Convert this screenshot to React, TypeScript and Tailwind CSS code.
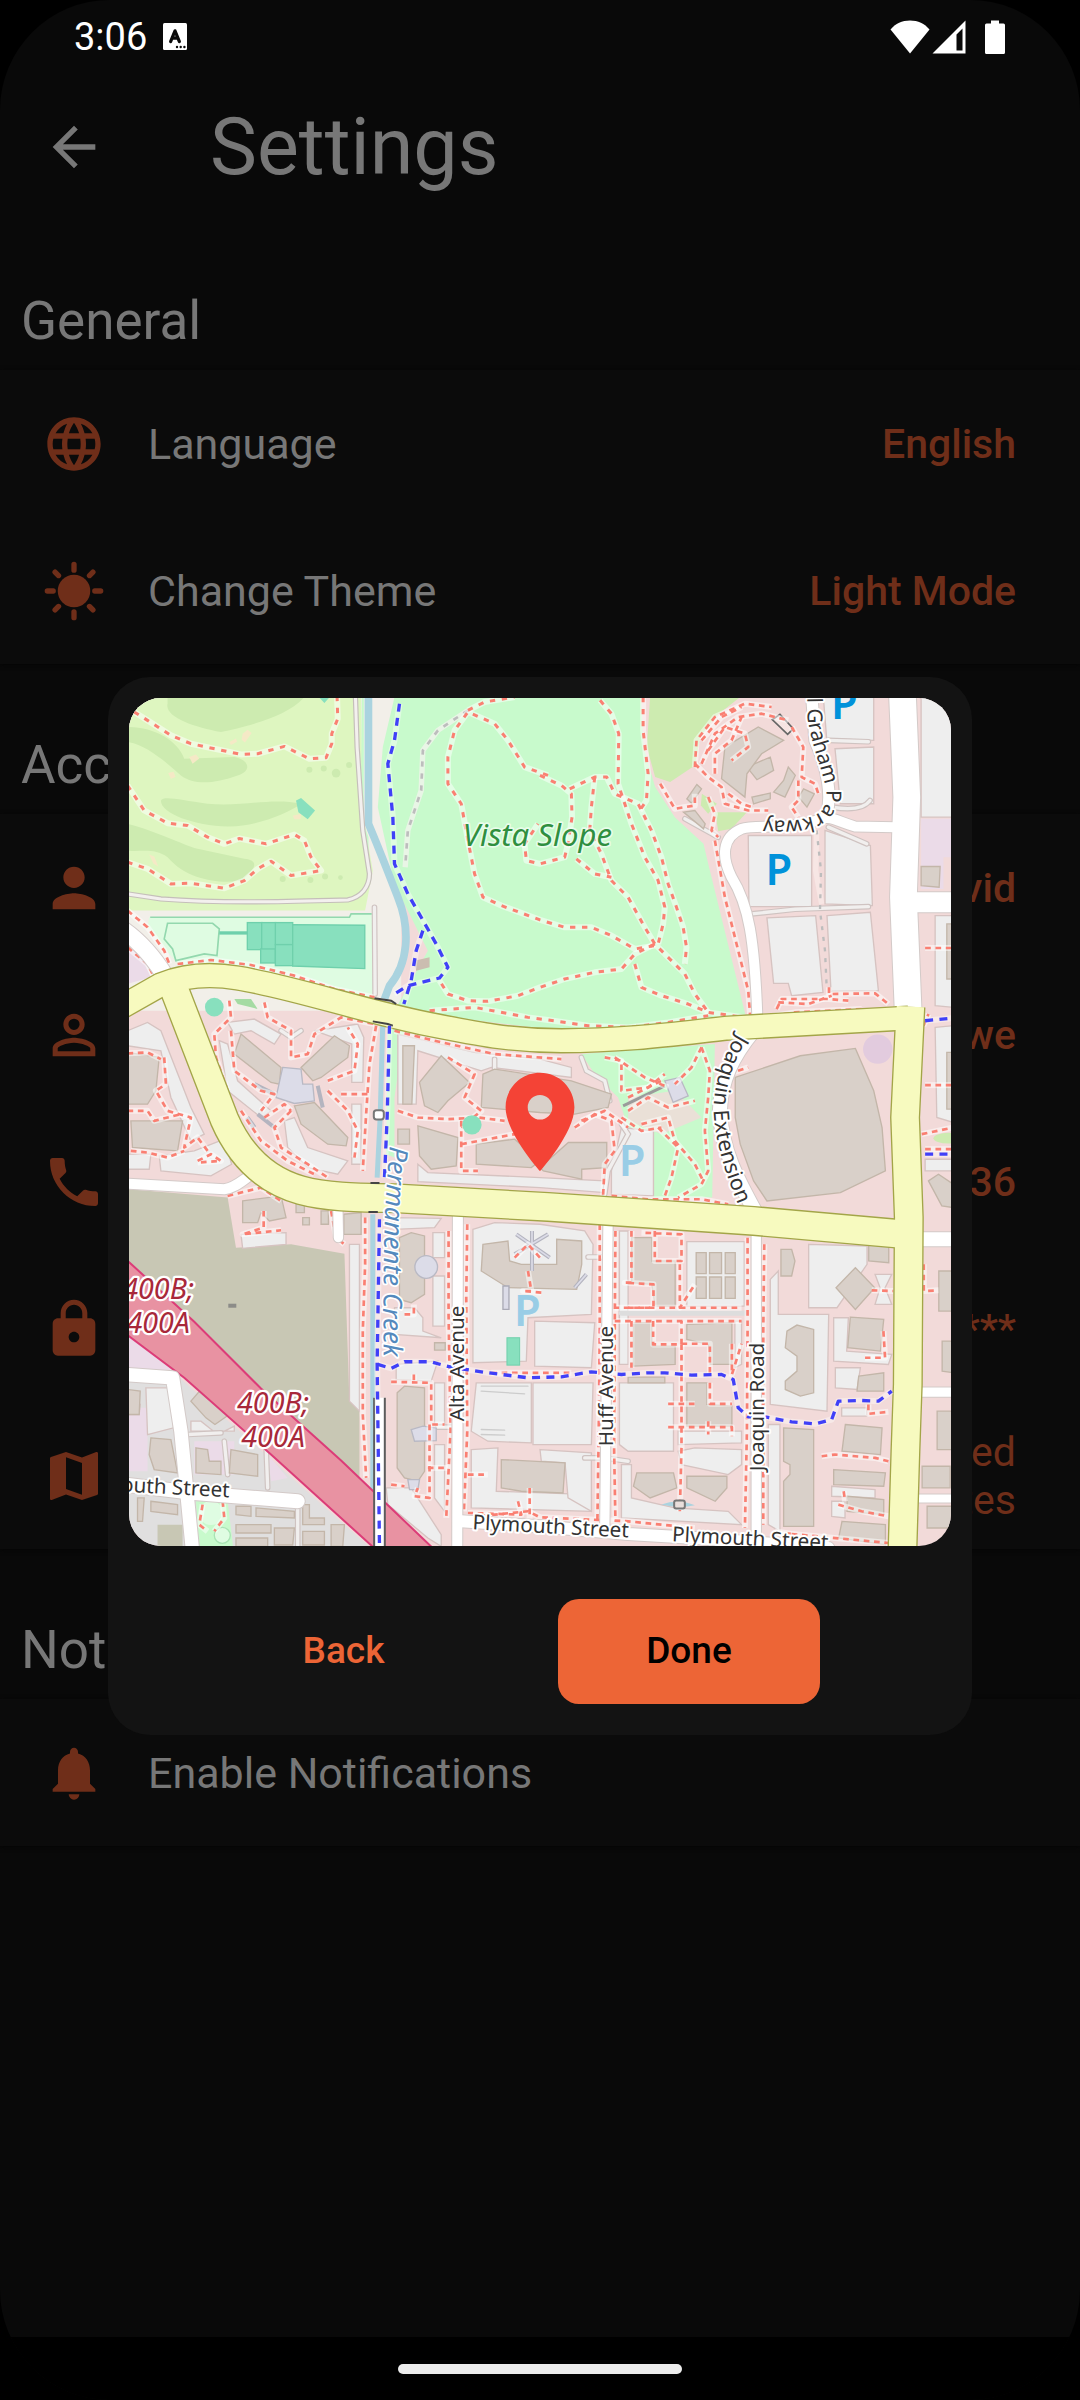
import React from "react";
import type { IconType } from "react-icons";
import {
  MdArrowBack,
  MdLanguage,
  MdPerson,
  MdPersonOutline,
  MdPhone,
  MdLock,
  MdMap,
  MdNotifications,
  MdLocationOn,
} from "react-icons/md";

/* ---------- map data ---------- */

const fairways = [
  "M120 20C110 60 200 90 280 105C350 90 480 60 530 0L120 0Z",
  "M0 90C80 90 150 130 170 185L320 180C370 190 370 225 330 235C260 260 200 265 160 235C110 190 50 140 0 135Z",
  "M100 310C110 295 160 310 240 320C350 330 430 300 520 320C480 350 380 390 300 388C200 385 100 350 100 310Z",
  "M0 380C80 400 160 440 210 455L350 485C400 490 380 520 340 550C280 560 180 550 120 480C80 450 40 465 0 460Z",
  "M1566 0L1836 0L1760 60L1716 120L1700 205L1626 255L1581 240L1556 150Z",
  "M1721 290L1766 320L1740 350L1718 325Z",
  "M1761 345L1856 345L1810 395L1770 402Z",
];

const parkings = [
  "1860,415 2050,415 2050,628 1862,628",
  "2090,400 2226,445 2232,625 2090,620",
  "1916,662 2062,655 2084,885 1990,895 1980,858 1936,858",
  "2096,655 2226,645 2250,880 2108,882",
  "2085,0 2236,0 2236,130 2095,125",
  "2120,155 2236,150 2236,320 2136,320",
  "2378,0 2475,0 2475,360 2378,360",
  "2420,655 2475,655 2475,930 2420,925",
  "2420,990 2475,985 2475,1275 2425,1260",
  "0,1000 60,975 100,1000 190,1230 230,1310 190,1330 130,1200 100,1060 0,1045",
  "0,1370 70,1370 65,1415 0,1415",
  "95,1375 200,1360 290,1325 312,1400 250,1435 100,1420",
  "300,975 380,965 460,1010 440,1040 370,1000 320,1010",
  "275,1030 300,1040 330,1150 430,1240 400,1260 300,1180",
  "560,1000 690,980 708,1020 705,1155 672,1155 672,1040",
  "672,1220 700,1220 700,1400 672,1400",
  "470,1270 500,1260 540,1350 660,1390 630,1430 540,1410 480,1350",
  "810,1010 1040,1065 1236,1085 1330,1110 1330,1140 1090,1110 1060,1120 870,1060 865,1220 810,1220",
  "870,1400 900,1425 1236,1440 1430,1450 1430,1485 1236,1470 870,1452",
  "1480,1290 1576,1300 1576,1495 1450,1490 1450,1420",
  "340,1610 475,1605 475,1640 345,1652",
  "665,1640 695,1640 695,2140 665,2110",
  "800,1560 940,1562 920,1590 800,1595",
  "915,1605 950,1605 950,1680 915,1680",
  "915,1735 950,1735 950,1885 915,1885",
  "800,1830 860,1830 885,1860 885,1900 940,1920 800,1910",
  "805,2000 930,1990 910,2050 805,2045",
  "775,2370 850,2370 940,2510 940,2545 900,2520 780,2420",
  "920,2055 950,2055 950,2180 920,2180",
  "920,2240 950,2240 950,2440 920,2400",
  "1035,1595 1100,1575 1236,1580 1370,1600 1395,1640 1390,1850 1200,1860 1195,1990 1035,1995",
  "1220,1870 1400,1875 1390,2010 1220,2005",
  "1045,2055 1210,2055 1210,2235 1080,2230 1030,2200",
  "1215,2055 1395,2055 1390,2240 1215,2240",
  "1030,2255 1110,2250 1105,2380 1390,2390 1390,2440 1030,2430",
  "1236,2255 1390,2265 1390,2440 1320,2400 1311,2295 1240,2290",
  "1474,1600 1500,1600 1500,2000 1474,2000",
  "1676,1632 1848,1632 1848,1825 1676,1825",
  "1474,2055 1636,2055 1636,2260 1500,2260 1474,2240",
  "1650,2200 1840,2200 1840,2235 1650,2240",
  "1820,1870 1840,1870 1840,2000 1820,2010",
  "1480,2300 1510,2300 1510,2400 1640,2430 1800,2440 1840,2480 1480,2460",
  "1650,2260 1700,2250 1840,2255 1840,2300 1800,2330 1660,2300",
  "2041,1640 2216,1645 2216,1700 2126,1830 2041,1830",
  "1926,1745 1950,1720 1950,1850 2101,1850 2096,2140 1926,2120",
  "2240,1730 2290,1730 2270,1770 2290,1820 2240,1820 2255,1770",
  "2116,1860 2160,1860 2155,1960 2290,1970 2280,2000 2116,1990",
  "2121,2010 2196,2010 2186,2075 2121,2070",
  "2140,2130 2215,2130 2215,2155 2140,2155",
  "1920,2180 1955,2180 1955,2500 1920,2480",
  "2110,2365 2240,2375 2240,2400 2110,2395",
  "2110,2410 2150,2410 2150,2460 2110,2455",
  "2390,1385 2475,1385 2475,1420 2390,1420",
  "0,2120 38,2120 35,2150 0,2150",
  "55,2070 130,2070 138,2190 60,2210",
  "190,2170 220,2170 270,2210 320,2185 320,2200 190,2200",
];

const buildings = [
  "2378,508 2435,508 2432,570 2378,565",
  "2455,680 2475,680 2475,845 2455,845",
  "2455,1065 2475,1065 2475,1235 2455,1235",
  "1666,345 1700,340 1731,380 1726,395",
  "1676,305 1706,262 1720,275 1690,318",
  "1856,210 1926,180 1936,220 1886,248",
  "1936,285 1966,250 1980,210 2001,235 1970,300",
  "1871,300 1926,288 1926,305 1876,320",
  "2011,300 2026,275 2058,290 2036,330",
  "1790,150 1890,90 1966,130 1900,170 1856,230 1850,300 1780,245",
  "1821,1140 2016,1075 2181,1053 2236,1180 2261,1290 2271,1420 2136,1485 1916,1510 1876,1450 1836,1340 1821,1260",
  "875,1155 940,1075 1025,1155 960,1210 930,1245 890,1225",
  "825,1045 860,1045 852,1220 825,1220",
  "1065,1130 1100,1115 1330,1150 1450,1190 1440,1230 1340,1250 1236,1245 1060,1230",
  "870,1285 990,1320 985,1405 910,1415 875,1375",
  "810,1295 845,1295 845,1340 810,1340",
  "1045,1340 1160,1325 1236,1390 1210,1410 1045,1400",
  "1236,1410 1321,1335 1436,1335 1436,1410 1361,1415 1361,1445 1246,1420",
  "340,1010 460,1110 455,1160 430,1155 320,1070",
  "520,1110 620,1015 665,1045 660,1080 580,1140 555,1150",
  "500,1225 560,1215 660,1320 655,1345 600,1340 520,1280",
  "0,1065 95,1080 85,1180 60,1220 0,1220",
  "10,1270 165,1270 150,1360 15,1350",
  "345,1510 460,1495 475,1560 425,1570 400,1545 390,1575 345,1575",
  "505,1515 530,1515 530,1545 505,1545",
  "580,1540 602,1540 602,1580 580,1580",
  "525,1560 545,1560 545,1582 525,1582",
  "648,1550 700,1545 700,1610 648,1610",
  "815,1620 850,1605 890,1615 890,1790 850,1815 815,1805",
  "920,1935 952,1935 952,1957 920,1957",
  "808,2085 830,2065 890,2070 890,2320 870,2350 830,2340 808,2310",
  "1065,1640 1140,1630 1145,1690 1180,1700 1286,1700 1286,1625 1361,1630 1361,1700 1346,1775 1140,1770 1060,1720",
  "1120,2285 1311,2295 1305,2385 1180,2380 1120,2370",
  "1511,1620 1571,1620 1571,1690 1641,1690 1641,1825 1581,1825 1571,1760 1511,1755",
  "1516,1875 1571,1875 1571,1945 1641,1945 1641,2000 1516,2005",
  "1676,1880 1811,1875 1811,2000 1746,2000 1741,1940 1676,1925",
  "1676,2055 1736,2055 1736,2120 1811,2125 1811,2185 1676,2185",
  "1500,2038 1610,2038 1610,2055 1500,2055",
  "1704,1665 1734,1665 1734,1728 1704,1728",
  "1744,1665 1780,1665 1780,1728 1744,1728",
  "1791,1665 1821,1665 1821,1728 1791,1728",
  "1704,1738 1734,1738 1734,1802 1704,1802",
  "1744,1738 1780,1738 1780,1802 1744,1802",
  "1791,1738 1821,1738 1821,1802 1791,1802",
  "1526,2325 1636,2325 1646,2370 1566,2400 1516,2365",
  "1676,2335 1796,2335 1796,2370 1761,2410 1676,2370",
  "1958,1655 1990,1655 2000,1690 1990,1735 1958,1735",
  "2181,1710 2239,1770 2181,1835 2123,1770",
  "2221,1640 2281,1640 2281,1695 2221,1690",
  "1976,1900 2006,1882 2056,1895 2056,2085 2016,2095 1971,2075 1971,2050 2006,2020 2006,1975 1971,1950",
  "2166,1858 2266,1865 2256,1960 2158,1950",
  "2191,2035 2266,2025 2266,2080 2186,2080",
  "1966,2190 2056,2195 2056,2485 1966,2485 1966,2350 1985,2330 1985,2300 1966,2290",
  "2151,2180 2261,2190 2256,2270 2141,2260",
  "2116,2315 2271,2325 2266,2365 2116,2360",
  "2156,2395 2266,2405 2266,2450 2156,2440",
  "2141,2470 2271,2480 2271,2540 2131,2520",
  "2431,1720 2475,1720 2475,1840 2431,1840",
  "2441,1930 2475,1930 2475,2025 2441,2020",
  "2426,2140 2475,2140 2475,2255 2426,2255",
  "2381,2305 2465,2305 2465,2370 2381,2370",
  "2396,2425 2475,2425 2475,2490 2396,2490",
  "2400,1450 2430,1430 2475,1460 2475,1530 2440,1525",
  "0,2075 38,2080 35,2150 0,2150",
  "70,2220 130,2225 150,2325 80,2315 65,2270",
  "190,2110 220,2075 305,2150 262,2180 235,2160",
  "205,2250 240,2255 245,2290 280,2290 280,2330 205,2325",
  "310,2255 390,2270 390,2335 305,2325",
  "325,2425 370,2425 370,2455 325,2450",
  "385,2430 500,2440 500,2460 385,2455",
  "325,2480 430,2480 430,2505 325,2505",
  "525,2420 545,2420 545,2460 590,2460 590,2480 525,2480",
  "525,2500 590,2500 590,2541 525,2541",
  "610,2480 650,2480 645,2545 610,2545",
  "30,2400 50,2400 45,2470 30,2470",
  "70,2410 150,2420 150,2450 70,2440",
  "440,2490 500,2490 495,2541 440,2541",
  "325,2520 420,2520 420,2545 325,2545",
];

const lavender = [
  "465,1110 520,1115 525,1160 555,1160 560,1210 500,1218 445,1200",
  "850,2195 885,2185 925,2190 925,2228 860,2230",
  "1610,1150 1655,1140 1680,1195 1635,1215",
  "840,2345 875,2345 870,2375 845,2375",
];

const parkPaths = [
  "20,45 60,70 130,115 190,140 340,172 390,170 470,148 545,185 595,182 612,140 612,110 630,65 628,0",
  "0,265 50,340 120,378 180,385 240,420 290,440 335,424 415,440 500,412 530,430 550,480 580,520 490,535 430,492 390,515 350,550 290,573 190,558 130,560 60,515 0,495",
  "1260,235 1190,210 1140,130 1100,80 1020,45 980,100 960,180 960,260 1000,320 1020,430 1040,530 1065,600 1120,625 1236,668 1310,690 1390,690 1450,715 1520,755 1580,745",
  "1020,40 1070,15 1160,0",
  "1416,10 1450,50 1472,110 1470,260 1510,380 1550,480 1590,550 1610,630 1605,680 1590,740",
  "1236,235 1300,265 1330,290 1332,360 1320,440 1310,480 1236,500 1195,490 1190,440 1230,380",
  "1325,275 1400,240 1436,240 1460,290 1530,320 1570,400 1600,480 1620,560 1645,630 1665,690 1675,750 1670,800",
  "1400,240 1390,330 1385,400 1420,470 1450,550 1500,600 1550,690 1580,740 1640,800 1670,830 1700,890 1740,945",
  "1545,0 1545,100 1560,230 1555,310 1535,340",
  "1345,485 1400,530 1450,540",
  "1580,740 1520,770 1480,815 1400,825 1310,845 1236,870 1170,895 1080,912 1020,910 960,890 935,850",
  "1520,800 1540,870 1600,895 1680,920 1740,945 1850,960",
  "905,940 1040,930 1200,960 1260,968 1380,985 1500,990 1620,975 1740,955",
];

const footways = [
  "0,640 60,690 110,760 125,800",
  "150,800 250,788 370,803 500,835 620,875 740,900",
  "1760,430 1790,600 1830,760 1860,880 1866,960",
  "305,910 310,960 260,1010 265,1080 300,1180",
  "410,915 420,960 490,1000 490,1080 540,1070 560,1010 640,960 740,980",
  "310,1000 320,1120 400,1180 440,1190 400,1240",
  "600,1150 680,1120 690,1040 660,990",
  "640,1190 720,1190",
  "600,1180 660,1240 690,1300 680,1380",
  "490,1240 440,1290 460,1350 540,1400 600,1440",
  "340,1240 400,1330 480,1390 560,1430",
  "410,1260 470,1220 490,1240",
  "745,985 725,1100 715,1250 705,1420",
  "712,1560 712,1700 705,1900 705,2150 715,2340",
  "0,1240 60,1240 80,1270 160,1250",
  "110,1080 115,1160 85,1180 120,1240 190,1260 170,1350 210,1320 240,1360",
  "10,1360 60,1365 120,1380 170,1360",
  "210,1390 250,1370 280,1390 210,1395",
  "300,1495 400,1470 460,1510",
  "408,1540 408,1590 345,1610 460,1598",
  "610,1540 625,1620 650,1640",
  "0,750 60,800 80,840",
  "0,1068 60,1065 100,1085",
  "800,1000 920,1030 1100,1070 1300,1085",
  "960,1080 1040,1130 1010,1200 1060,1240 1000,1290",
  "810,1240 870,1260 960,1265 1050,1260 1130,1270",
  "1000,1270 1000,1420 1050,1420",
  "1000,1340 1160,1310 1240,1320",
  "1340,1290 1400,1250 1450,1270 1460,1360 1430,1400 1425,1495",
  "1360,1270 1430,1240 1500,1290",
  "1430,1080 1480,1090 1480,1180 1560,1170 1610,1130",
  "1460,1080 1550,1140 1620,1170",
  "1720,1050 1690,1110 1640,1160",
  "1720,1050 1745,1120 1740,1200 1730,1300 1740,1420 1720,1460 1650,1500",
  "1500,1200 1600,1150",
  "1500,1240 1560,1200 1620,1230 1700,1210",
  "1540,1280 1620,1260 1640,1330 1700,1400 1725,1450",
  "1590,1290 1650,1350 1630,1440 1610,1495",
  "1480,1260 1540,1300 1600,1290",
  "1450,1495 1560,1505 1720,1505 1800,1520",
  "1700,210 1705,130 1760,60 1850,20 1930,30",
  "1720,200 1760,110 1830,60 1900,50 1980,70",
  "1740,160 1790,90 1850,110 1860,150 1810,190",
  "1700,200 1740,240 1780,270 1790,320 1860,340 1920,340",
  "1760,230 1760,170 1810,130 1840,60",
  "1720,130 1780,60 1840,30",
  "1990,90 2025,150 2020,240 2060,260 2070,290",
  "2010,250 2010,310 1990,330 2010,360",
  "1596,260 1640,335 1700,325 1700,290",
  "1740,300 1760,350 1750,400 1770,420",
  "1800,290 1840,320 1870,330",
  "2102,870 2102,890 2240,888 2280,920",
  "1945,935 1960,905 2100,905 2160,910",
  "1950,915 2040,920 2110,895",
  "1905,960 2000,945 2200,935",
  "1800,1130 1860,1110",
  "962,1600 962,1850 968,2200 955,2460",
  "1018,1580 1015,1800 1018,2200 1008,2440",
  "1415,1580 1415,1900 1412,2200 1408,2470",
  "1462,1600 1460,1900 1458,2250 1462,2470",
  "1858,1620 1858,1900 1856,2200 1850,2490",
  "1908,1640 1905,1900 1905,2300 1905,2480",
  "1510,1600 1510,1755 1490,1755 1576,1760 1576,1830 1460,1830",
  "1580,1600 1580,1690 1660,1690 1660,1610 1540,1605",
  "1655,1700 1655,1830 1700,1760",
  "1500,1830 1840,1830",
  "1510,1870 1510,2010",
  "1460,1870 1840,1870",
  "1575,1870 1575,1940 1660,1940 1660,1870",
  "1660,1940 1660,2250 1655,2440",
  "1660,1938 1745,1938 1745,2030",
  "1811,1938 1811,2030 1840,1938",
  "1745,2055 1745,2118 1811,2118",
  "1620,2118 1700,2118",
  "1620,2188 1811,2188 1811,2215",
  "1740,2170 1740,2210",
  "830,1850 858,1850 858,1820",
  "790,2052 910,2055 910,2180 950,2180",
  "858,2030 858,2060",
  "905,2180 905,2400 860,2395 870,2370",
  "790,2360 830,2365",
  "900,2310 960,2310",
  "1020,2330 1080,2330",
  "1205,2370 1205,2470",
  "1170,2410 1180,2450 1020,2445",
  "1200,1720 1210,1780 1185,1780 1240,1785",
  "1160,1680 1200,1640 1236,1680",
  "1090,2025 1230,2025 1330,2025",
  "1000,2460 1200,2440 1236,2458 1500,2470 1700,2490",
  "2230,1778 2295,1780",
  "2265,1900 2270,1980 2210,1980",
  "2080,2275 2120,2270 2240,2280 2280,2290",
  "2130,2420 2200,2440 2280,2455",
  "2146,2380 2150,2410",
  "2220,2120 2220,2148 2280,2142",
  "1990,2508 2280,2535",
  "2386,1700 2386,1780 2430,1778",
  "2390,752 2475,752",
  "2390,1163 2475,1163",
  "2380,1310 2475,1290",
  "2390,1355 2475,1355",
  "2385,985 2400,950",
  "1940,2500 1990,2508",
  "225,2420 215,2480 240,2500",
  "285,2410 290,2460 260,2500",
];

const cycleways = [
  "815,20 800,130 780,200 795,360 800,500 840,590 880,660 925,740 960,810 935,842 840,865 800,890",
  "885,700 865,760 850,850 828,920",
  "785,985 778,1260 770,1440",
  "755,1565 748,2000 755,2545",
  "750,2000 790,2012 830,1992 910,1992 945,2002 980,2010 1080,2025 1200,2040 1300,2037 1390,2022 1480,2030 1560,2025 1610,2025 1690,2032 1780,2030 1815,2045 1830,2130 1860,2157 1910,2157 1990,2172 2060,2178 2110,2165 2130,2110 2200,2108 2250,2110 2290,2080",
  "2390,970 2475,962",
  "2390,1370 2475,1370",
];

const whiteRoads: { d: string; w: number }[] = [
  { d: "M-10 700Q60 750 115 840", w: 50 },
  { d: "M2322 -10L2335 300L2325 600L2340 960", w: 80 },
  { d: "M2050 -10L2060 130C2100 220 2110 300 2095 350", w: 34 },
  { d: "M2300 390L2180 388C2120 370 2100 350 2060 372C1960 400 1880 380 1840 395C1780 420 1780 480 1810 540C1860 620 1880 720 1888 980", w: 30 },
  { d: "M1876 1000C1810 1080 1778 1150 1775 1240C1780 1360 1830 1450 1885 1550", w: 42 },
  { d: "M990 1540L988 2545", w: 30 },
  { d: "M1440 1560L1430 2500", w: 28 },
  { d: "M1884 1600L1884 2530", w: 28 },
  { d: "M1000 2470L1236 2485L1500 2508L1700 2520L2100 2550", w: 36 },
  { d: "M-10 2030L135 2040L160 2200L195 2560", w: 40 },
  { d: "M-10 2360L200 2385L510 2410", w: 42 },
  { d: "M-10 1458L290 1475C330 1470 350 1440 390 1420", w: 30 },
  { d: "M630 1520L632 1620", w: 28 },
  { d: "M2340 615L2480 615", w: 60 },
  { d: "M2340 1625L2480 1625", w: 42 },
  { d: "M2340 2083L2480 2083", w: 28 },
  { d: "M2340 2402L2480 2402", w: 24 },
];

const serviceRoads = [
  "M1870 650L2000 636L2220 628",
  "M2100 130L2220 134",
  "M2110 330Q2200 345 2225 310",
  "M2100 390L2215 440",
  "M1670 365L1770 420",
  "M1100 1085L1100 1120",
  "M510 2410L510 2560",
  "M415 2240L420 2370",
  "M180 2210L280 2205",
  "M460 1000L490 1020L520 1000",
  "M1360 1080L1375 1120L1430 1150L1445 1210",
  "M1480 1280L1500 1310L1440 1420L1430 1490",
  "M740 630L742 890",
  "M290 2230L300 2330",
  "M1380 1678L1430 1678",
  "M1370 2280L1430 2280L1500 2290",
  "M930 2188L990 2188",
];

const yellowRoads: { d: string; w: number }[] = [
  { d: "M-20 930L100 862C180 830 260 830 330 842C500 870 700 940 900 980C1050 1010 1150 1030 1300 1030C1500 1030 1650 1008 1800 992L2340 962", w: 68 },
  { d: "M130 850L290 1265C340 1380 420 1450 520 1478C600 1500 700 1500 800 1502L1260 1528L1876 1570L2330 1610", w: 82 },
  { d: "M2346 928L2330 1260L2341 1560L2338 2060L2331 2260L2322 2560", w: 82 },
];

function Poly({ items, fill, stroke }: { items: string[]; fill: string; stroke: string }) {
  return (
    <g fill={fill} stroke={stroke} strokeWidth={4}>
      {items.map((p) => (
        <polygon key={p} points={p} />
      ))}
    </g>
  );
}

function Dashes({ items, color, width, dash, halo }: { items: string[]; color: string; width: number; dash: string; halo: number }) {
  return (
    <g fill="none" strokeLinejoin="round">
      {items.map((p) => (
        <polyline key={"h" + p} points={p} stroke="#ffffff" strokeOpacity={halo} strokeWidth={18} />
      ))}
      {items.map((p) => (
        <polyline key={p} points={p} stroke={color} strokeWidth={width} strokeDasharray={dash} />
      ))}
    </g>
  );
}

function StreetMap() {
  return (
    <svg
      viewBox="3 3 2466 2541"
      preserveAspectRatio="xMidYMid slice"
      className="block aspect-[822/848] w-full"
      role="img"
      aria-label="Street map"
    >
      <rect width="2480" height="2560" fill="#f2dad9" />

      {/* land */}
      <path d="M0 0H820V940H0Z" fill="#f2efe9" />
      <path d="M0 0H700L705 350L735 520L712 640H0Z" fill="#def6c0" />
      <path d="M800 0H1539L1546 150L1581 270L1640 360L1726 440L1740 500L1856 970L1300 1000L800 940L900 760L800 560L750 330L765 150Z" fill="#c8facc" />
      <path d="M702 0H708V380L722 420V540L715 500L700 380Z" fill="#c8facc" />
      {fairways.map((d) => (
        <path key={d} d={d} fill="#cdebb0" />
      ))}
      <g fill="#cdebb0">
        <circle cx="545" cy="218" r="9" />
        <circle cx="588" cy="214" r="9" />
        <circle cx="625" cy="228" r="13" />
        <circle cx="664" cy="204" r="9" />
        <circle cx="465" cy="545" r="9" />
        <circle cx="548" cy="548" r="9" />
        <circle cx="592" cy="538" r="9" />
        <circle cx="638" cy="541" r="7" />
      </g>
      <g fill="#f5e9c6">
        <path d="M345 110L360 98L372 108L352 136L342 128Z" />
        <path d="M185 180L205 172L215 184L195 200Z" />
        <path d="M122 228L138 224L144 240L130 245Z" />
        <path d="M65 472L80 478L92 508L78 500Z" />
        <path d="M495 356L520 350L518 366L500 366Z" />
        <path d="M305 135L325 124L328 134L310 144Z" />
      </g>
      <path d="M505 310L520 303L562 340L540 366L512 345Z" fill="#88e0be" />
      <path d="M573 0H606L590 18Z" fill="#88e0be" />
      <path d="M0 1475L300 1500L325 1650L490 1640L650 1668L665 2110L695 2140V2360L0 1690Z" fill="#c8c7b4" />
      <path d="M0 1900L740 2560H0Z" fill="#e0dfdf" />
      <path d="M0 1900L160 2040L0 2010ZM0 2130H60V2320H0ZM200 2230H320V2330H200ZM420 2270L480 2340L430 2350Z" fill="#ebdbe8" />
      <path d="M0 740L50 790L70 840L0 860Z" fill="#ebdbe8" />
      <path d="M205 2410H300L318 2560H215Z" fill="#c8facc" />
      <circle cx="250" cy="2445" r="36" fill="#dffce2" />
      <circle cx="284" cy="2512" r="24" fill="#dffce2" stroke="#a9e3b4" strokeWidth="4" />
      <path d="M90 2480H165V2560H90Z" fill="#c8c7b4" />
      <path d="M1360 1070L1760 1040L1752 1500H1576L1576 1330L1500 1290L1470 1200L1400 1130Z" fill="#c8facc" />
      <path d="M1500 1200L1640 1180L1720 1260L1600 1310L1500 1270Z" fill="#f2dad9" fillOpacity="0.8" />
      <path d="M780 960L830 990L800 1200L800 1380L775 1370Z" fill="#c8facc" />
      <path d="M2378 365H2445V580H2378ZM2445 365H2475V480H2445Z" fill="#ebdbe8" />
      <path d="M2370 575H2475V940H2370Z" fill="#f2dad9" />
      <ellipse cx="2460" cy="1322" rx="45" ry="16" fill="#cdebb0" />
      <circle cx="2248" cy="1055" r="44" fill="#e2cbde" />

      {/* sports ground */}
      <path d="M65 660H665L670 650L735 648V905L500 830L150 800L60 690Z" fill="#dffce2" />
      <path d="M68 660H665L670 650H732M120 678H255L275 695L268 775L230 770L145 790L135 755L110 725Z" fill="none" stroke="#93d8ae" strokeWidth="5" />
      <g fill="#88e0be" stroke="#6fd0ac" strokeWidth="4">
        <path d="M275 707H360" strokeWidth="10" />
        <rect x="359" y="676" width="44" height="81" />
        <rect x="402" y="676" width="42" height="81" />
        <rect x="399" y="755" width="44" height="42" />
        <rect x="443" y="676" width="52" height="66" />
        <rect x="443" y="742" width="52" height="63" />
        <path d="M495 682L711 684V814L495 806Z" />
      </g>
      <circle cx="260" cy="929" r="28" fill="#88e0be" />
      <path d="M320 905L370 905L390 935L330 920Z" fill="#a5dba3" />

      <Poly items={parkings} fill="#eeeeee" stroke="#d6c3c1" />
      <rect x="1137" y="1920" width="38" height="82" fill="#88e0be" stroke="#6fd0ac" strokeWidth="3" />

      {/* water */}
      <path d="M722 0V380C760 470 790 550 810 600C850 700 840 800 785 865L770 905" fill="none" stroke="#aad3df" strokeWidth="23" />
      <path d="M765 970L757 1260L748 1440M735 1550V2400" fill="none" stroke="#aad3df" strokeWidth="15" />

      {/* service roads and paths */}
      <g fill="none" strokeLinecap="round">
        <path d="M0 590L100 605C300 620 500 612 660 608C700 600 725 570 725 530L705 400L688 150L683 0" stroke="#c5bfba" strokeWidth="16" />
        <path d="M0 590L100 605C300 620 500 612 660 608C700 600 725 570 725 530L705 400L688 150L683 0" stroke="#f3f0ee" strokeWidth="9" />
        {serviceRoads.map((d) => (
          <path key={"c" + d} d={d} stroke="#cfc3c1" strokeWidth="17" />
        ))}
        {serviceRoads.map((d) => (
          <path key={d} d={d} stroke="#f1efee" strokeWidth="10" />
        ))}
        <path d="M1480 1846H1850" stroke="#dddddd" strokeWidth="16" />
        <path d="M1060 2065H1200M1060 2080L1190 2088M1060 2195L1130 2197M1060 2210L1130 2212" stroke="#cccccc" strokeWidth="4" />
      </g>
      <g fill="none">
        <polyline points="1020,40 930,100 885,160 880,280 840,400 832,510" stroke="#e9f5e6" strokeWidth="16" />
        <polyline points="1020,40 930,100 885,160 880,280 840,400 832,510" stroke="#bdbdbd" strokeWidth="8" strokeDasharray="16 20" />
        <polyline points="2065,400 2062,520 2080,620" stroke="#f7e6e4" strokeWidth="16" />
        <polyline points="2065,400 2078,520 2075,640 2090,760 2095,870" stroke="#bdbdbd" strokeWidth="7" strokeDasharray="12 20" />
      </g>

      <Poly items={buildings} fill="#d9d0c9" stroke="#c3b6a9" />
      <Poly items={lavender} fill="#dcdce8" stroke="#b9b9c4" />
      <circle cx="895" cy="1708" r="34" fill="#dcdce8" stroke="#b9b9c4" strokeWidth="4" />
      <path d="M1160 1670L1260 1610M1165 1610L1265 1680M1212 1600V1720M570 1165L585 1230M380 1160L440 1190M390 1250L440 1290M1340 1770L1375 1730" stroke="#b4b4bf" strokeWidth="12" fill="none" />
      <path d="M1160 1670L1260 1610M1165 1610L1265 1680M1212 1600V1720M1340 1770L1375 1730" stroke="#dcdce8" strokeWidth="5" fill="none" />
      <path d="M1125 1765H1143V1835H1125Z" fill="#dcdce8" stroke="#aaaab6" strokeWidth="4" />
      <path d="M1485 1225L1610 1165" stroke="#9b9b9b" strokeWidth="9" />
      <path d="M1932 68L1955 52L1995 95L1978 112Z" fill="#f6e4e2" stroke="#666666" strokeWidth="5" />
      <path d="M860 790L905 780L905 810L865 820Z" fill="#cbbdb0" />
      <path d="M1600 2420Q1650 2400 1700 2422Q1650 2432 1600 2420Z" fill="#aad3df" />
      <path d="M370 1360L400 1380M358 1260L380 1290" stroke="#b4b4bf" strokeWidth="14" />
      <rect x="302" y="1818" width="24" height="12" fill="#8c8c88" />

      <Dashes items={parkPaths} color="#fa8072" width={9} dash="16 20" halo={0.5} />
      <Dashes items={footways} color="#fa7f72" width={8} dash="17 14" halo={0.5} />
      <circle cx="1032" cy="1282" r="29" fill="#88e0be" />

      {/* motorway */}
      <path d="M-10 1680L200 1872L400 2072L640 2288L925 2560H750L430 2270L170 2040L-10 1905Z" fill="#e892a2" stroke="#dc3c78" strokeWidth="6" />

      {/* minor roads */}
      <g fill="none" strokeLinecap="round" strokeLinejoin="round">
        {whiteRoads.map((r) => (
          <path key={"c" + r.d} d={r.d} stroke="#d3cac8" strokeWidth={r.w + 6} />
        ))}
        {whiteRoads.map((r) => (
          <path key={r.d} d={r.d} stroke="#ffffff" strokeWidth={r.w} />
        ))}
      </g>

      {/* main roads */}
      <g fill="none" strokeLinejoin="round">
        {yellowRoads.map((r) => (
          <path key={"c" + r.d} d={r.d} stroke="#a3a548" strokeWidth={r.w + 8} />
        ))}
        {yellowRoads.map((r) => (
          <path key={r.d} d={r.d} stroke="#f7fabf" strokeWidth={r.w} />
        ))}
      </g>
      <path d="M740 903L790 910L805 920M735 972L780 980L795 985M728 1456H755M722 1543H750" stroke="#444444" strokeWidth="6" fill="none" />

      <path d="M738 2100V2545H772V2100Z" fill="#ffffff" />
      <path d="M739 2100V2545M771 2100V2545" stroke="#5c5c5c" strokeWidth="6" />
      <Dashes items={cycleways} color="#4040f8" width={10} dash="24 19" halo={0.4} />
      <rect x="738" y="1238" width="30" height="28" rx="8" fill="#ffffff" stroke="#777777" strokeWidth="6" />
      <rect x="1638" y="2408" width="32" height="24" rx="6" fill="#e9dedb" stroke="#777777" strokeWidth="6" />

      {/* labels */}
      <defs>
        <path id="parkway" d="M2036 -70L2038 60C2048 150 2086 220 2094 290C2098 345 2060 362 2000 368C1950 372 1900 368 1800 364" />
        <path id="extension" d="M1826 1008C1778 1090 1758 1160 1756 1235C1760 1340 1795 1440 1850 1570" />
        <path id="creek" d="M786 1345C772 1500 764 1600 768 2060" />
      </defs>
      <g fontFamily='"Noto Sans", sans-serif' stroke="#ffffff" strokeLinejoin="round" paintOrder="stroke">
        <g fontSize="130" fontWeight="600" strokeWidth="0" fill="#0092da">
          <text x="1912" y="562">P</text>
          <text x="2108" y="65">P</text>
          <text x="1472" y="1435" fill="#99cde6">P</text>
          <text x="1158" y="1885" fill="#99cde6">P</text>
        </g>
        <g fontSize="62" fill="#333333" strokeWidth="12">
          <text><textPath href="#parkway">Bill Graham Parkway</textPath></text>
          <text fontSize="64"><textPath href="#extension">Joaquin Extension</textPath></text>
          <text transform="translate(1008 2170) rotate(-90)">Alta Avenue</text>
          <text transform="translate(1456 2245) rotate(-90)">Huff Avenue</text>
          <text transform="translate(1908 2320) rotate(-90)">Joaquin Road</text>
          <text transform="translate(305 2398) rotate(3)" textAnchor="end">Plymouth Street</text>
          <text transform="translate(1033 2494) rotate(3)">Plymouth Street</text>
          <text transform="translate(1631 2530) rotate(3)">Plymouth Street</text>
        </g>
        <text fontSize="78" fontStyle="italic" fill="#5489bd" strokeWidth="10">
          <textPath href="#creek">Permanente Creek</textPath>
        </text>
        <text x="1228" y="446" textAnchor="middle" fontSize="93" fontStyle="italic" fill="#2f8f3f" strokeWidth="10" strokeOpacity="0.6">Vista Slope</text>
        <g fontSize="86" fontStyle="italic" textAnchor="middle" fill="#a8283a" strokeWidth="14">
          <text x="92" y="1803">400B;</text>
          <text x="92" y="1906">400A</text>
          <text x="436" y="2146">400B;</text>
          <text x="436" y="2248">400A</text>
        </g>
      </g>
    </svg>
  );
}

/* ---------- icons ---------- */

function SunIcon({ className }: { className?: string }) {
  return (
    <svg viewBox="0 0 24 24" className={className} fill="currentColor" aria-hidden="true">
      <circle cx="12" cy="12" r="6.1" />
      <path
        d="M12 2V4.2M12 19.8V22M2 12H4.2M19.800 12H22M4.9 4.900L6.2 6.2M17.800 17.800L19.1 19.1M4.9 19.1L6.2 17.8M17.8 6.2L19.1 4.9"
        stroke="currentColor"
        strokeWidth="2"
        strokeLinecap="round"
      />
    </svg>
  );
}

function StatusBar() {
  return (
    <div className="flex h-[73px] items-center justify-between pr-[75px] pl-[74px] text-white">
      <div className="flex items-center gap-4">
        <span className="text-[38px] leading-[44px]">3:06</span>
        <svg viewBox="0 0 24 27" className="h-[27px] w-6" aria-hidden="true">
          <rect width="24" height="27" rx="1.5" fill="#ffffff" />
          <path d="M7.6 18.6L12 7.8L16.4 18.6M9.2 15.2H14.8" fill="none" stroke="#090909" strokeWidth="3.2" strokeLinecap="round" strokeLinejoin="round" />
          <g fill="#090909">
            <circle cx="14" cy="24" r="1.2" />
            <circle cx="17.7" cy="24" r="1.2" />
            <circle cx="21.4" cy="24" r="1.2" />
          </g>
        </svg>
      </div>
      <div className="flex items-center">
        <svg viewBox="0 0 40 34" className="h-[34px] w-10" fill="#ffffff" aria-hidden="true">
          <path d="M20 33.500L0.500 9.500C5.500 3.500 12 0.500 20 0.500S34.500 3.500 39.500 9.500Z" />
        </svg>
        <svg viewBox="0 0 34 34" className="ml-[2px] h-[34px] w-[34px]" fill="#ffffff" aria-hidden="true">
          <path fillRule="evenodd" d="M0.500 33.500L33.500 0.500V33.500ZM24.500 14.500V30.500H30.500V8.500Z" />
        </svg>
        <svg viewBox="0 0 20 34" className="ml-[19px] h-[34px] w-5" fill="#ffffff" aria-hidden="true">
          <path d="M6 0.500H14V3.500H18.500Q20 3.500 20 5V32.500Q20 34 18.500 34H1.500Q0 34 0 32.500V5Q0 3.500 1.500 3.500H6Z" />
        </svg>
      </div>
    </div>
  );
}

/* ---------- settings list ---------- */

type Row = {
  icon: IconType | typeof SunIcon;
  label: string;
  value?: string;
  wrap?: boolean;
};

const sections: { title: string; rows: Row[] }[] = [
  {
    title: "General",
    rows: [
      { icon: MdLanguage, label: "Language", value: "English" },
      { icon: SunIcon, label: "Change Theme", value: "Light Mode" },
    ],
  },
  {
    title: "Account",
    rows: [
      { icon: MdPerson, label: "First Name", value: "David" },
      { icon: MdPersonOutline, label: "Last Name", value: "Lowe" },
      { icon: MdPhone, label: "Phone Number", value: "0123456736" },
      { icon: MdLock, label: "Password", value: "********" },
      { icon: MdMap, label: "Location", value: "Selected Coordinates", wrap: true },
    ],
  },
  {
    title: "Notifications",
    rows: [{ icon: MdNotifications, label: "Enable Notifications" }],
  },
];

function SettingsRow({ icon: Icon, label, value, wrap }: Row) {
  return (
    <li>
      <button type="button" className="flex h-[147px] w-full items-center pr-16 pl-[42px] text-left">
        <Icon className="h-16 w-16 shrink-0 text-[#6f2e19]" />
        <span className="ml-[42px] flex-1 text-[43px] leading-[48px] text-[#777777]">{label}</span>
        {value && (
          <span
            className={
              wrap
                ? "w-[250px] text-right text-[41px] leading-[48px] text-[#6f2e19]"
                : "text-right text-[41px] leading-[48px] font-medium text-[#6f2e19]"
            }
          >
            {value}
          </span>
        )}
      </button>
    </li>
  );
}

export default function App() {
  return (
    <div className="min-h-screen bg-black font-['Roboto',sans-serif]">
      <div className="relative flex min-h-screen flex-col overflow-hidden rounded-[110px] bg-[#090909]">
        <StatusBar />
        <header className="flex h-[147px] items-center pl-[42px]">
          <button type="button" aria-label="Back to previous screen" className="text-[#777777]">
            <MdArrowBack className="h-16 w-16" />
          </button>
          <h1 className="ml-[104px] text-[79px] leading-[92px] text-[#777777]">Settings</h1>
        </header>

        <main className="flex-1">
          {sections.map((s) => (
            <section key={s.title}>
              <h2 className="flex h-[150px] items-end px-[21px] pb-[18px] text-[53px] leading-[62px] text-[#777777]">
                {s.title}
              </h2>
              <ul className="bg-[#0b0b0b] shadow-[0_1px_4px_#050505]">
                {s.rows.map((r) => (
                  <SettingsRow key={r.label} {...r} />
                ))}
              </ul>
            </section>
          ))}
        </main>

        <div className="flex h-[63px] items-center justify-center bg-black">
          <div className="h-[10px] w-[284px] rounded-full bg-[#ececec]" />
        </div>

        <div className="absolute inset-0 flex items-center justify-center pt-[74px] pb-[63px]">
          <div role="dialog" aria-modal="true" aria-label="Choose location" className="w-4/5 rounded-[42px] bg-[#131313] p-[21px]">
            <div className="relative overflow-hidden rounded-[32px]">
              <StreetMap />
              <div className="absolute inset-0 flex items-center justify-center">
                <MdLocationOn className="h-[118px] w-[118px] text-[#f44336]" />
              </div>
            </div>
            <div className="mt-[53px] mb-[10px] flex items-center justify-evenly">
              <button type="button" className="h-[105px] w-[167px] rounded-[21px] text-[37px] leading-[44px] font-medium text-[#ed6536]">
                Back
              </button>
              <button type="button" className="h-[105px] w-[262px] rounded-[21px] bg-[#ed6536] text-[37px] leading-[44px] font-medium text-black">
                Done
              </button>
            </div>
          </div>
        </div>
      </div>
    </div>
  );
}
